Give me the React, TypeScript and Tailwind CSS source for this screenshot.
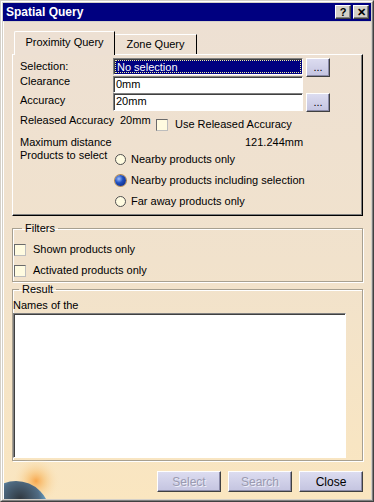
import React from "react";

const sunken =
  "border border-t-[#808080] border-l-[#808080] border-r-white border-b-white shadow-[inset_1px_1px_0_#404040]";
const raised =
  "border border-t-white border-l-white border-r-[#404040] border-b-[#404040] shadow-[inset_-1px_-1px_0_#8a8aa8]";

function Dots() {
  return (
    <button className={`${raised} ml-[3px] flex h-[19px] w-[24px] items-center justify-center bg-gradient-to-b from-[#dcdcf0] to-[#c4c4e0] text-[11px] leading-none text-black`}>
      <span className="-mt-[1px]">...</span>
    </button>
  );
}

function Check({ label }: { label: string }) {
  return (
    <div className="flex h-[13px] items-center">
      <span className="h-[12px] w-[12px] shrink-0 border border-t-[#6a6a6a] border-l-[#6a6a6a] border-r-[#bdbdbd] border-b-[#bdbdbd] bg-[#fffbe0]" />
      <span className="ml-[7px] leading-[13px]">{label}</span>
    </div>
  );
}

function Radio({ label, on }: { label: string; on?: boolean }) {
  return (
    <div className="flex h-[13px] items-center">
      {on ? (
        <span className="h-[11px] w-[11px] shrink-0 rounded-full bg-[radial-gradient(circle_at_35%_35%,#9fc0ff_0%,#2050c0_40%,#0a1e6a_100%)] shadow-[0_0_0_1px_#b08850]" />
      ) : (
        <span className="h-[11px] w-[11px] shrink-0 rounded-full border border-[#505050] bg-[#fffbe0]" />
      )}
      <span className="ml-[5px] leading-[13px]">{label}</span>
    </div>
  );
}

function Globe() {
  return (
    <svg className="pointer-events-none absolute bottom-0 left-0" width="70" height="40" viewBox="0 0 70 40">
      <defs>
        <radialGradient id="glow" cx="32" cy="22" r="24" gradientUnits="userSpaceOnUse">
          <stop offset="0" stopColor="#f7a040" stopOpacity="0.9" />
          <stop offset="0.4" stopColor="#f8c070" stopOpacity="0.55" />
          <stop offset="1" stopColor="#fae6c0" stopOpacity="0" />
        </radialGradient>
        <radialGradient id="earth" cx="16" cy="40" r="32" gradientUnits="userSpaceOnUse">
          <stop offset="0" stopColor="#303840" />
          <stop offset="0.6" stopColor="#506c84" />
          <stop offset="0.85" stopColor="#6aa8d0" />
          <stop offset="1" stopColor="#b0dcf0" />
        </radialGradient>
      </defs>
      <circle cx="32" cy="22" r="24" fill="url(#glow)" />
      <circle cx="12" cy="56" r="34" fill="url(#earth)" />
    </svg>
  );
}

export default function App() {
  return (
    <div className="h-[502px] w-[374px] border border-t-[#d4d0c8] border-l-[#d4d0c8] border-r-[#404040] border-b-[#404040] bg-[#d4d0c8] font-['Liberation_Sans',Arial,sans-serif] text-[11px] text-black">
      <div className="flex h-full flex-col border border-t-white border-l-white border-r-[#808080] border-b-[#808080] p-[1px]">
        {/* Title bar */}
        <div className="flex h-[18px] shrink-0 items-center bg-[#000080] pl-[3px] pr-[2px]">
          <span className="text-[12px] font-bold text-white">Spatial Query</span>
          <div className="ml-auto flex gap-[2px]">
            <span className={`${raised} flex h-[14px] w-[16px] items-center justify-center bg-[#d4d0c8] text-[11px] font-bold leading-none shadow-[inset_-1px_-1px_0_#808080]`}>?</span>
            <span className={`${raised} flex h-[14px] w-[16px] items-center justify-center bg-[#d4d0c8] text-[11px] font-bold leading-none shadow-[inset_-1px_-1px_0_#808080]`}>✕</span>
          </div>
        </div>

        {/* Body */}
        <div className="relative flex flex-1 flex-col border-l border-t border-l-white border-t-[#d4d0c8] bg-gradient-to-b from-[#ede0d3] via-[#f1e2cc] to-[#fae6c0] px-[8px] pt-[10px]">
          <Globe />

          {/* Tabs */}
          <div className="relative z-10 flex h-[22px] items-end pl-[2px]">
            <div className="-mb-[1px] flex h-[24px] w-[101px] items-center justify-center rounded-tl-[2px] border-l border-t border-r border-l-white border-t-white border-r-black bg-[#ede0d3] pb-[2px]">
              Proximity Query
            </div>
            <div className="flex h-[20px] w-[82px] items-center justify-center border-t border-r border-t-white border-r-black">
              Zone Query
            </div>
          </div>

          {/* Tab panel */}
          <div className="h-[162px] border border-t-white border-l-white border-r-black border-b-black pl-[7px] pt-[3px] shadow-[inset_-1px_-1px_0_#808080]">
            <div className="flex h-[18px] items-start">
              <span className="w-[93px] pt-[1px] leading-[14px]">Selection:</span>
              <div className={`${sunken} h-[17px] w-[190px] bg-[#000080] p-[1px]`}>
                <div className="h-full border border-dotted border-[#f0f0a0] pl-[1px] leading-[12px] text-white">No selection</div>
              </div>
              <Dots />
            </div>
            <div className="flex h-[17px] items-start">
              <span className="w-[93px] -mt-[2px] leading-[14px]">Clearance</span>
              <div className={`${sunken} h-[17px] w-[190px] bg-white pl-[2px] leading-[14px]`}>0mm</div>
            </div>
            <div className="flex h-[19px] items-start">
              <span className="w-[93px] leading-[14px]">Accuracy</span>
              <div className={`${sunken} h-[18px] w-[190px] bg-white pl-[2px] leading-[15px]`}>20mm</div>
              <Dots />
            </div>
            <div className="flex h-[23px] items-start">
              <span className="w-[100px] pt-[1px] leading-[14px]">Released Accuracy</span>
              <span className="w-[36px] pt-[1px] leading-[14px]">20mm</span>
              <div className="mt-[6px]">
                <Check label="Use Released Accuracy" />
              </div>
            </div>
            <div className="flex h-[13px] items-start">
              <span className="w-[225px] leading-[14px]">Maximum distance</span>
              <span className="leading-[14px]">121.244mm</span>
            </div>
            <div className="flex items-start">
              <span className="w-[95px] leading-[14px]">Products to select</span>
              <div className="mt-[5px] flex flex-col gap-[8px]">
                <Radio label="Nearby products only" />
                <Radio label="Nearby products including selection" on />
                <Radio label="Far away products only" />
              </div>
            </div>
          </div>

          {/* Filters */}
          <fieldset className="mt-[6px] h-[60px] border border-[#a8a090] shadow-[inset_1px_1px_0_white,1px_1px_0_white]">
            <legend className="ml-[9px] px-[3px] leading-[13px]">Filters</legend>
            <div className="mt-[8px] flex flex-col gap-[8px] pl-[1px]">
              <Check label="Shown products only" />
              <Check label="Activated products only" />
            </div>
          </fieldset>

          {/* Result */}
          <fieldset className="mt-[1px] h-[178px] border border-[#a8a090] shadow-[inset_1px_1px_0_white,1px_1px_0_white]">
            <legend className="ml-[6px] px-[3px] leading-[13px]">Result</legend>
            <div className="mt-[3px] leading-[13px]">Names of the</div>
            <div className={`${sunken} mt-[1px] h-[145px] w-[333px] bg-white`} />
          </fieldset>

          {/* Buttons */}
          <div className="relative z-10 mt-[10px] flex justify-end gap-[7px]">
            <button className={`${raised} h-[21px] w-[64px] bg-gradient-to-b from-[#dcdcf0] to-[#c4c4e0] text-[12px] text-[#9a9ab0] [text-shadow:1px_1px_0_#eeeef8]`}>Select</button>
            <button className={`${raised} h-[21px] w-[64px] bg-gradient-to-b from-[#dcdcf0] to-[#c4c4e0] text-[12px] text-[#9a9ab0] [text-shadow:1px_1px_0_#eeeef8]`}>Search</button>
            <button className={`${raised} h-[21px] w-[64px] bg-gradient-to-b from-[#dcdcf0] to-[#c4c4e0] text-[12px] text-black`}>Close</button>
          </div>
        </div>
      </div>
    </div>
  );
}
